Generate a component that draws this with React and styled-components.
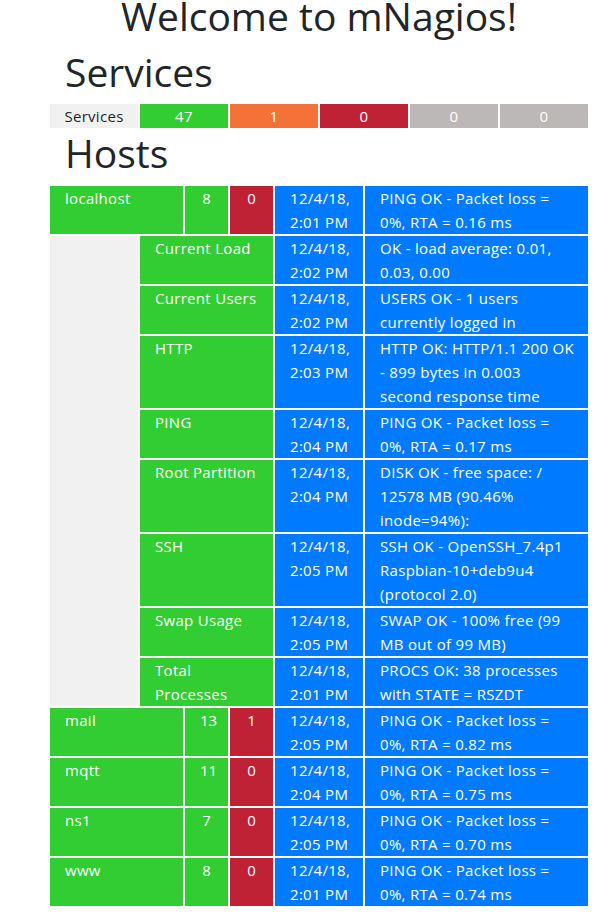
import React from "react";
import styled, { createGlobalStyle } from "styled-components";

const GlobalStyle = createGlobalStyle`
  body {
    margin: 0;
    background: #fff;
    color: #212529;
    font-family: "Open Sans", "Noto Sans", sans-serif;
    font-size: 15px;
    line-height: 24px;
  }
`;

const colors = {
  ok: "limegreen",
  warn: "#f47237",
  crit: "#bf2234",
  unknown: "#bcb8b7",
  info: "#007bff",
  label: "#f1f1f1",
};

const summary = [
  { value: 47, state: "ok" },
  { value: 1, state: "warn" },
  { value: 0, state: "crit" },
  { value: 0, state: "unknown" },
  { value: 0, state: "unknown" },
];

const localServices = [
  ["Current Load", "2:02 PM", "OK - load average: 0.01, 0.03, 0.00"],
  ["Current Users", "2:02 PM", "USERS OK - 1 users currently logged in"],
  ["HTTP", "2:03 PM", "HTTP OK: HTTP/1.1 200 OK - 899 bytes in 0.003 second response time"],
  ["PING", "2:04 PM", "PING OK - Packet loss = 0%, RTA = 0.17 ms"],
  ["Root Partition", "2:04 PM", "DISK OK - free space: / 12578 MB (90.46% inode=94%):"],
  ["SSH", "2:05 PM", "SSH OK - OpenSSH_7.4p1 Raspbian-10+deb9u4 (protocol 2.0)"],
  ["Swap Usage", "2:05 PM", "SWAP OK - 100% free (99 MB out of 99 MB)"],
  ["Total Processes", "2:01 PM", "PROCS OK: 38 processes with STATE = RSZDT"],
];

const hosts = [
  { name: "localhost", ok: 8, bad: 0, time: "2:01 PM", rta: "0.16", services: localServices },
  { name: "mail", ok: 13, bad: 1, time: "2:05 PM", rta: "0.82" },
  { name: "mqtt", ok: 11, bad: 0, time: "2:04 PM", rta: "0.75" },
  { name: "ns1", ok: 7, bad: 0, time: "2:05 PM", rta: "0.70" },
  { name: "www", ok: 8, bad: 0, time: "2:01 PM", rta: "0.74" },
];

const Page = styled.div`
  width: 538px;
  margin-left: 50px;
`;

const Title = styled.h1`
  margin: 0;
  font-size: 39px;
  line-height: 32px;
  font-weight: 400;
  text-align: center;
`;

const Heading = styled.h2`
  margin: ${(p) => p.$top}px 0 ${(p) => p.$bottom}px;
  padding-left: 15px;
  font-size: 39px;
  line-height: 46px;
  font-weight: 400;
`;

const SummaryBar = styled.div`
  display: grid;
  grid-template-columns: repeat(6, 1fr);
  gap: 2px;
`;

const SummaryCell = styled.div`
  background: ${(p) => colors[p.$state]};
  color: ${(p) => (p.$state === "label" ? "#212529" : "#fff")};
  text-align: center;
  height: 24px;
  letter-spacing: 0.3px;
`;

const HostGrid = styled.div`
  display: grid;
  grid-template-columns: 88px 43px 43px 43px 88px 1fr;
  gap: 2px;
`;

const Cell = styled.div`
  background: ${(p) => colors[p.$state]};
  color: #fff;
  padding: 0 15px;
  letter-spacing: 0.3px;
  grid-column: span ${(p) => p.$span || 1};
  min-width: 0;
`;

const CountCell = styled(Cell)`
  text-align: center;
  letter-spacing: 0;
`;

const TimeCell = styled(Cell)`
  padding-right: 8px;
`;

const OutputCell = styled(Cell)`
  padding-right: 12.5px;
`;

const Spacer = styled.div`
  background: ${colors.label};
  grid-row: span ${(p) => p.$rows};
`;

const HostRows = ({ host }) => (
  <>
    <Cell $state="ok" $span={2}>{host.name}</Cell>
    <CountCell $state="ok">{host.ok}</CountCell>
    <CountCell $state="crit">{host.bad}</CountCell>
    <TimeCell $state="info">12/4/18, {host.time}</TimeCell>
    <OutputCell $state="info">
      PING OK - Packet loss = 0%, RTA = {host.rta} ms
    </OutputCell>
    {host.services && (
      <>
        <Spacer $rows={host.services.length} />
        {host.services.map(([name, time, output]) => (
          <React.Fragment key={name}>
            <Cell $state="ok" $span={3}>{name}</Cell>
            <TimeCell $state="info">12/4/18, {time}</TimeCell>
            <OutputCell $state="info">{output}</OutputCell>
          </React.Fragment>
        ))}
      </>
    )}
  </>
);

export default function App() {
  return (
    <>
      <GlobalStyle />
      <Page>
        <Title>Welcome to mNagios!</Title>
        <Heading $top={17} $bottom={9}>Services</Heading>
        <SummaryBar>
          <SummaryCell $state="label">Services</SummaryCell>
          {summary.map((s, i) => (
            <SummaryCell key={i} $state={s.state}>{s.value}</SummaryCell>
          ))}
        </SummaryBar>
        <Heading $top={2} $bottom={10}>Hosts</Heading>
        <HostGrid>
          {hosts.map((h) => (
            <HostRows key={h.name} host={h} />
          ))}
        </HostGrid>
      </Page>
    </>
  );
}
